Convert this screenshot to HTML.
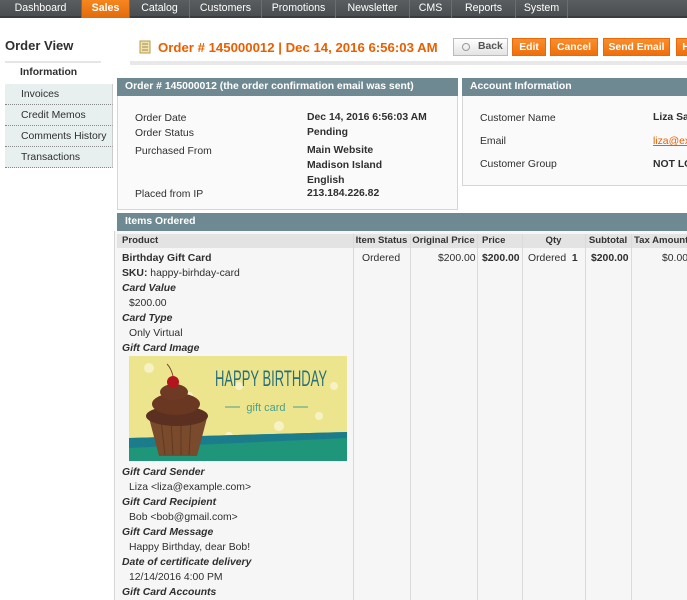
<!DOCTYPE html>
<html><head><meta charset="utf-8"><style>
*{margin:0;padding:0;box-sizing:border-box}
body{width:687px;height:600px;overflow:hidden;background:#fff;font-family:"Liberation Sans",Arial,sans-serif;font-size:10.4px;color:#2f2f2f;position:relative}
.a{position:absolute;white-space:nowrap}
#nav{position:absolute;left:0;top:0;width:687px;height:18px;background:linear-gradient(#5a5e60,#4a4e50);border-bottom:2px solid #3a3d3f}
#nav span{position:absolute;top:0;height:18px;line-height:16px;color:#fff;font-size:10.6px;text-align:center;border-right:1px solid #6a6e70}
.b{position:absolute;top:38px;height:18px;line-height:17px;font-weight:bold;font-size:10.4px;color:#fff;background:linear-gradient(#f98e2c,#ef6f0c);border:1px solid #e66a0a;text-align:center}
.hd{position:absolute;background:#6f8992;color:#fff;font-weight:bold;font-size:10.4px;line-height:18px;padding-left:8px;height:18px}
.box{position:absolute;background:#fafafa;border:1px solid #d6d6d6;border-top:none}
.side{position:absolute;left:5px;width:108px;height:21px;line-height:21px;padding-left:16px;background:#e7efef;border-bottom:1px dotted #888;border-right:1px solid #ccc}
.th{position:absolute;top:234px;height:14px;line-height:14px;font-weight:bold;font-size:9.6px;color:#333;background:#e3e3e3}
.vl{position:absolute;top:234px;width:1px;height:366px;background:#dadada}
i{font-style:italic;font-weight:bold}
</style></head><body>
<div id="nav">
<span style="left:0;width:82px">Dashboard</span>
<span style="left:82px;width:48px;background:linear-gradient(#f7861f,#e16b0c);font-weight:bold">Sales</span>
<span style="left:130px;width:60px">Catalog</span>
<span style="left:190px;width:72px">Customers</span>
<span style="left:262px;width:74px">Promotions</span>
<span style="left:336px;width:74px">Newsletter</span>
<span style="left:410px;width:42px">CMS</span>
<span style="left:452px;width:64px">Reports</span>
<span style="left:516px;width:52px">System</span>
</div>
<div class="a" style="left:5px;top:38px;font-size:13px;font-weight:bold;color:#2f2f2f">Order View</div>
<div class="a" style="left:5px;top:61px;width:96px;height:2px;background:#e5e5e5"></div>
<div class="a" style="left:20px;top:67px;font-weight:bold">Information</div>
<div class="side" style="top:84px">Invoices</div>
<div class="side" style="top:105px">Credit Memos</div>
<div class="side" style="top:126px">Comments History</div>
<div class="side" style="top:147px">Transactions</div>
<svg class="a" style="left:139px;top:40px" width="13" height="14"><rect x="1" y="1" width="10" height="12" fill="#f3e3a8" stroke="#b69a4a"/><line x1="3" y1="4" x2="9" y2="4" stroke="#9a8a5a"/><line x1="3" y1="7" x2="9" y2="7" stroke="#9a8a5a"/><line x1="3" y1="10" x2="9" y2="10" stroke="#9a8a5a"/></svg>
<div class="a" style="left:158px;top:40px;font-size:13.2px;font-weight:bold;color:#eb5e00">Order # 145000012 | Dec 14, 2016 6:56:03 AM</div>
<div class="a" style="left:130px;top:61px;width:557px;height:4px;background:#e8e8e8"></div>
<div class="a" style="left:453px;top:38px;width:55px;height:18px;border:1px solid #bbb;background:linear-gradient(#fff,#e3e3e3);line-height:16px;font-weight:bold;color:#555;padding-left:24px">Back<span style="position:absolute;left:8px;top:4px;width:8px;height:8px;border:1px solid #999;border-radius:50%"></span></div>
<div class="b" style="left:512px;width:34px">Edit</div>
<div class="b" style="left:550px;width:48px">Cancel</div>
<div class="b" style="left:603px;width:67px">Send Email</div>
<div class="b" style="left:676px;width:20px">H</div>

<div class="hd" style="left:117px;top:78px;width:341px">Order # 145000012 (the order confirmation email was sent)</div>
<div class="box" style="left:117px;top:96px;width:341px;height:114px"></div>
<div class="a" style="left:135px;top:113px">Order Date</div>
<div class="a" style="left:135px;top:128px">Order Status</div>
<div class="a" style="left:135px;top:146px">Purchased From</div>
<div class="a" style="left:135px;top:189px">Placed from IP</div>
<div class="a" style="left:307px;top:112px;font-weight:bold">Dec 14, 2016 6:56:03 AM</div>
<div class="a" style="left:307px;top:127px;font-weight:bold">Pending</div>
<div class="a" style="left:307px;top:145px;font-weight:bold">Main Website</div>
<div class="a" style="left:307px;top:160px;font-weight:bold">Madison Island</div>
<div class="a" style="left:307px;top:175px;font-weight:bold">English</div>
<div class="a" style="left:307px;top:188px;font-weight:bold">213.184.226.82</div>

<div class="hd" style="left:462px;top:78px;width:225px">Account Information</div>
<div class="box" style="left:462px;top:96px;width:230px;height:90px"></div>
<div class="a" style="left:480px;top:113px">Customer Name</div>
<div class="a" style="left:480px;top:136px">Email</div>
<div class="a" style="left:480px;top:159px">Customer Group</div>
<div class="a" style="left:653px;top:112px;font-weight:bold">Liza Sa</div>
<div class="a" style="left:653px;top:136px;color:#eb5e00;text-decoration:underline">liza@ex</div>
<div class="a" style="left:653px;top:159px;font-weight:bold">NOT LO</div>

<div class="hd" style="left:117px;top:213px;width:570px">Items Ordered</div>
<div class="a" style="left:114px;top:231px;width:573px;height:369px;background:#f6f6f6;border-left:1px solid #d6d6d6"></div>
<div class="th" style="left:117px;width:236px;padding-left:5px">Product</div>
<div class="th" style="left:353px;width:57px;text-align:center">Item Status</div>
<div class="th" style="left:410px;width:67px;text-align:center">Original Price</div>
<div class="th" style="left:477px;width:45px;padding-left:5px">Price</div>
<div class="th" style="left:522px;width:63px;text-align:center">Qty</div>
<div class="th" style="left:585px;width:46px;text-align:center">Subtotal</div>
<div class="th" style="left:631px;width:60px;padding-left:3px">Tax Amount</div>
<div class="vl" style="left:353px"></div><div class="vl" style="left:410px"></div><div class="vl" style="left:477px"></div><div class="vl" style="left:522px"></div><div class="vl" style="left:585px"></div><div class="vl" style="left:631px"></div>

<div class="a" style="left:362px;top:253px">Ordered</div>
<div class="a" style="left:438px;top:253px">$200.00</div>
<div class="a" style="left:482px;top:253px;font-weight:bold">$200.00</div>
<div class="a" style="left:528px;top:253px">Ordered&nbsp; <b>1</b></div>
<div class="a" style="left:591px;top:253px;font-weight:bold">$200.00</div>
<div class="a" style="left:662px;top:253px">$0.00</div>

<div class="a" style="left:122px;top:253px;font-weight:bold">Birthday Gift Card</div>
<div class="a" style="left:122px;top:268px"><b>SKU:</b> happy-birhday-card</div>
<div class="a" style="left:122px;top:283px"><i>Card Value</i></div>
<div class="a" style="left:129px;top:298px">$200.00</div>
<div class="a" style="left:122px;top:313px"><i>Card Type</i></div>
<div class="a" style="left:129px;top:328px">Only Virtual</div>
<div class="a" style="left:122px;top:343px"><i>Gift Card Image</i></div>
<svg class="a" style="left:129px;top:356px" width="218" height="105">
<rect width="218" height="105" fill="#ece58e"/>
<g fill="#f6f2c4"><circle cx="20" cy="12" r="5"/><circle cx="60" cy="40" r="4"/><circle cx="110" cy="30" r="4"/><circle cx="150" cy="70" r="5"/><circle cx="190" cy="60" r="4"/><circle cx="100" cy="80" r="4"/><circle cx="205" cy="30" r="4"/></g>
<polygon points="0,82 218,76 218,105 0,105" fill="#1f957a"/>
<polygon points="0,82 218,76 218,82 0,92" fill="#1b7d8c"/>
<path d="M20,62 L30,100 L68,100 L78,62 Z" fill="#7a4a2c"/>
<g stroke="#5e3a22" stroke-width="1"><line x1="32" y1="64" x2="36" y2="99"/><line x1="42" y1="64" x2="44" y2="99"/><line x1="52" y1="64" x2="52" y2="99"/><line x1="62" y1="64" x2="60" y2="99"/></g>
<ellipse cx="48" cy="60" rx="31" ry="10" fill="#5b3020"/>
<ellipse cx="47" cy="48" rx="24" ry="11" fill="#6a3822"/>
<ellipse cx="45" cy="36" rx="14" ry="8" fill="#6e3a24"/>
<circle cx="44" cy="26" r="6" fill="#b3141e"/>
<path d="M44,20 Q42,12 38,8" stroke="#7a4a2c" fill="none"/>
<text x="142" y="30" font-family="Liberation Sans Narrow,Liberation Sans,sans-serif" font-size="22" fill="#2a6e78" text-anchor="middle" textLength="112" lengthAdjust="spacingAndGlyphs">HAPPY BIRTHDAY</text>
<text x="137" y="55" font-family="Liberation Sans,sans-serif" font-size="11" fill="#4b9f8a" text-anchor="middle">gift card</text>
<line x1="96" y1="51" x2="111" y2="51" stroke="#4b9f8a"/><line x1="164" y1="51" x2="179" y2="51" stroke="#4b9f8a"/>
</svg>
<div class="a" style="left:122px;top:467px"><i>Gift Card Sender</i></div>
<div class="a" style="left:129px;top:482px">Liza &lt;liza@example.com&gt;</div>
<div class="a" style="left:122px;top:497px"><i>Gift Card Recipient</i></div>
<div class="a" style="left:129px;top:512px">Bob &lt;bob@gmail.com&gt;</div>
<div class="a" style="left:122px;top:527px"><i>Gift Card Message</i></div>
<div class="a" style="left:129px;top:542px">Happy Birthday, dear Bob!</div>
<div class="a" style="left:122px;top:557px"><i>Date of certificate delivery</i></div>
<div class="a" style="left:129px;top:572px">12/14/2016 4:00 PM</div>
<div class="a" style="left:122px;top:587px"><i>Gift Card Accounts</i></div>
</body></html>
